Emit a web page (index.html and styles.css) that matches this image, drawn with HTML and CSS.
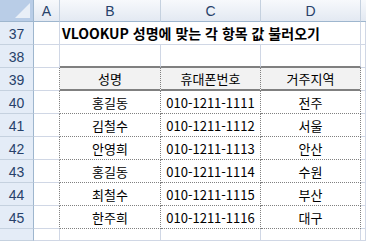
FILE: index.html
```html
<!DOCTYPE html>
<html lang="ko">
<head>
<meta charset="utf-8">
<link rel="stylesheet" href="styles.css">
</head>
<body>
<div class="sheet">
  <div class="corner"><span class="tri"></span></div>
  <div class="colh">A</div>
  <div class="colh">B</div>
  <div class="colh">C</div>
  <div class="colh">D</div>
  <div class="colh end"></div>

  <div class="rowh">37</div>
  <div class="c"></div>
  <div class="c title">VLOOKUP 성명에 맞는 각 항목 값 불러오기</div>
  <div class="c nob"></div>
  <div class="c"></div>
  <div class="c"></div>

  <div class="rowh">38</div>
  <div class="c"></div>
  <div class="c above"></div>
  <div class="c above"></div>
  <div class="c above"></div>
  <div class="c"></div>

  <div class="rowh">39</div>
  <div class="c edge"></div>
  <div class="t head">성명</div>
  <div class="t head">휴대폰번호</div>
  <div class="t head">거주지역</div>
  <div class="c"></div>

  <div class="rowh">40</div>
  <div class="c edge"></div>
  <div class="t">홍길동</div>
  <div class="t">010-1211-1111</div>
  <div class="t">전주</div>
  <div class="c"></div>

  <div class="rowh">41</div>
  <div class="c edge"></div>
  <div class="t">김철수</div>
  <div class="t">010-1211-1112</div>
  <div class="t">서울</div>
  <div class="c"></div>

  <div class="rowh">42</div>
  <div class="c edge"></div>
  <div class="t">안영희</div>
  <div class="t">010-1211-1113</div>
  <div class="t">안산</div>
  <div class="c"></div>

  <div class="rowh">43</div>
  <div class="c edge"></div>
  <div class="t">홍길동</div>
  <div class="t">010-1211-1114</div>
  <div class="t">수원</div>
  <div class="c"></div>

  <div class="rowh">44</div>
  <div class="c edge"></div>
  <div class="t">최철수</div>
  <div class="t">010-1211-1115</div>
  <div class="t">부산</div>
  <div class="c"></div>

  <div class="rowh">45</div>
  <div class="c edge"></div>
  <div class="t">한주희</div>
  <div class="t">010-1211-1116</div>
  <div class="t">대구</div>
  <div class="c"></div>

  <div class="rowh"></div>
  <div class="c"></div>
  <div class="c"></div>
  <div class="c"></div>
  <div class="c"></div>
  <div class="c"></div>
</div>
</body>
</html>
```

FILE: styles.css
```css
* { box-sizing: border-box; }
html, body { margin: 0; padding: 0; background: #ffffff; }
body {
  font-family: "Noto Sans CJK KR", "Noto Sans", sans-serif;
  width: 366px;
  height: 241px;
  overflow: hidden;
}
.sheet {
  display: grid;
  grid-template-columns: 34px 26px 101px 100px 100px 1fr;
  grid-template-rows: 22px repeat(9, 23px) 1fr;
  width: 366px;
  height: 241px;
}
.corner {
  position: relative;
  background: #b9cde7;
  border-right: 1px solid #9eb6ce;
  border-bottom: 1px solid #9eb6ce;
}
.tri {
  position: absolute;
  right: 3px;
  bottom: 3px;
  width: 0;
  height: 0;
  border-left: 15px solid transparent;
  border-bottom: 15px solid #e9eff7;
}
.colh {
  background: linear-gradient(#f7f9fc, #e3e9f2);
  border-right: 1px solid #c5d1df;
  border-bottom: 1px solid #9eb6ce;
  color: #27416a;
  font-family: "Liberation Sans", sans-serif;
  font-size: 14px;
  display: flex;
  align-items: center;
  justify-content: center;
  padding-top: 1px;
}
.colh.end { border-right: none; }
.rowh {
  background: #e4ecf7;
  border-right: 1px solid #9eb6ce;
  border-bottom: 1px solid #c5d1df;
  color: #27416a;
  font-family: "Liberation Sans", sans-serif;
  font-size: 14px;
  display: flex;
  align-items: center;
  justify-content: center;
  padding-top: 1px;
}
.c {
  border-right: 1px solid #d0d7e5;
  border-bottom: 1px solid #d0d7e5;
}
.c.title {
  border-right: none;
  font-weight: bold;
  font-size: 14px;
  white-space: nowrap;
  overflow: visible;
  display: flex;
  align-items: center;
  padding-left: 2px;
  color: #000;
}
.c.nob { border-right: none; }
.c.above { border-bottom: 2px solid #808080; }
.c.edge { border-right: 1px dotted #808080; }
.t {
  border-right: 1px dotted #808080;
  border-bottom: 1px dotted #808080;
  display: flex;
  align-items: center;
  justify-content: center;
  font-size: 13px;
  color: #000;
  white-space: nowrap;
}
.t.head {
  background: #f2f2f2;
  border-bottom: 2px solid #808080;
}
```
